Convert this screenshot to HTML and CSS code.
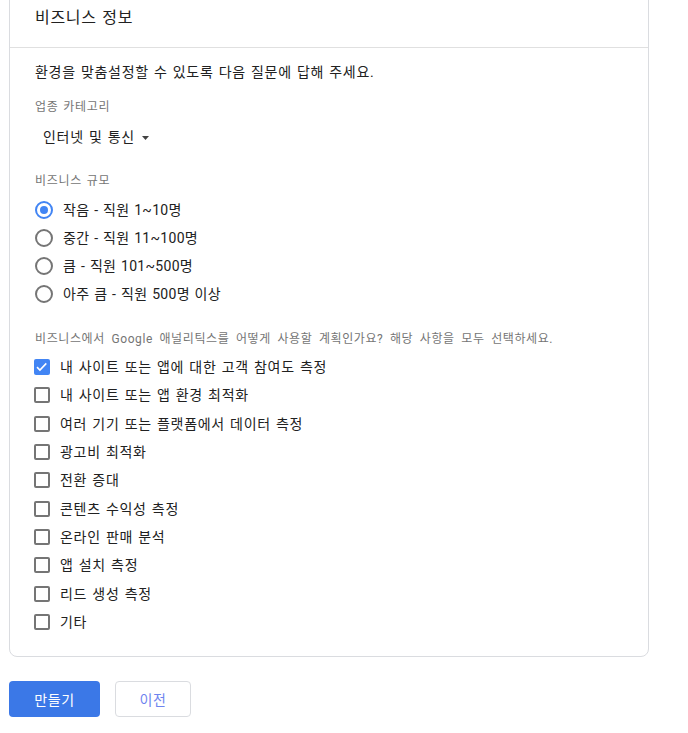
FILE: index.html
```html
<!DOCTYPE html>
<html lang="ko">
<head>
<meta charset="utf-8">
<title>비즈니스 정보</title>
<link rel="stylesheet" href="styles.css">
</head>
<body>
<div class="page">
  <section class="card">
    <div class="card-header">비즈니스 정보</div>
    <div class="card-body">
      <p class="intro">환경을 맞춤설정할 수 있도록 다음 질문에 답해 주세요.</p>

      <div class="label label-category">업종 카테고리</div>
      <div class="dropdown">
        <span>인터넷 및 통신</span>
        <svg class="caret" width="7" height="4" viewBox="0 0 7 4"><path d="M0 0h7L3.5 4z" fill="#424242"/></svg>
      </div>

      <div class="label label-size">비즈니스 규모</div>
      <div class="radios">
        <div class="row"><span class="radio checked"></span><span class="txt rtxt">작음 - 직원 1~10명</span></div>
        <div class="row"><span class="radio"></span><span class="txt rtxt">중간 - 직원 11~100명</span></div>
        <div class="row"><span class="radio"></span><span class="txt rtxt">큼 - 직원 101~500명</span></div>
        <div class="row"><span class="radio"></span><span class="txt rtxt">아주 큼 - 직원 500명 이상</span></div>
      </div>

      <div class="label label-usage">비즈니스에서 Google 애널리틱스를 어떻게 사용할 계획인가요? 해당 사항을 모두 선택하세요.</div>
      <div class="checks">
        <div class="crow"><span class="cbox checked"><svg width="16" height="16" viewBox="0 0 16 16"><path d="M3 8.2l2.9 2.8 6.4-6.6" fill="none" stroke="#fff" stroke-width="1.6"/></svg></span><span class="txt">내 사이트 또는 앱에 대한 고객 참여도 측정</span></div>
        <div class="crow"><span class="cbox"></span><span class="txt">내 사이트 또는 앱 환경 최적화</span></div>
        <div class="crow"><span class="cbox"></span><span class="txt">여러 기기 또는 플랫폼에서 데이터 측정</span></div>
        <div class="crow"><span class="cbox"></span><span class="txt">광고비 최적화</span></div>
        <div class="crow"><span class="cbox"></span><span class="txt">전환 증대</span></div>
        <div class="crow"><span class="cbox"></span><span class="txt">콘텐츠 수익성 측정</span></div>
        <div class="crow"><span class="cbox"></span><span class="txt">온라인 판매 분석</span></div>
        <div class="crow"><span class="cbox"></span><span class="txt">앱 설치 측정</span></div>
        <div class="crow"><span class="cbox"></span><span class="txt">리드 생성 측정</span></div>
        <div class="crow"><span class="cbox"></span><span class="txt">기타</span></div>
      </div>
    </div>
  </section>

  <div class="actions">
    <button class="btn btn-primary">만들기</button>
    <button class="btn btn-secondary">이전</button>
  </div>
</div>
</body>
</html>
```

FILE: styles.css
```css
* { box-sizing: border-box; }
html, body {
  margin: 0;
  padding: 0;
  background: #fff;
  overflow: hidden;
}
body {
  font-family: Roboto, "Noto Sans CJK KR", "Noto Sans", sans-serif;
  color: #212121;
  font-size: 14px;
  letter-spacing: 0.05em;
  word-spacing: 1px;
}
.page {
  padding-left: 9px;
}
.card {
  width: 640px;
  margin-top: -10px;
  border: 1px solid #dadce0;
  border-radius: 8px;
  background: #fff;
}
.card-header {
  font-size: 16px;
  line-height: 24px;
  height: 57px;
  padding: 15px 25px 0;
  border-bottom: 1px solid #e0e0e0;
  color: #212121;
}
.card-body {
  padding: 14px 25px 20px;
}
.intro {
  margin: 0;
  font-size: 14px;
  line-height: 20px;
}
.label {
  font-size: 12px;
  line-height: 16px;
  color: #757575;
}
.label-category { margin-top: 17px; }
.dropdown {
  margin-top: 12px;
  display: flex;
  align-items: center;
  gap: 7px;
  padding-left: 8px;
  height: 20px;
  font-size: 14px;
  line-height: 20px;
}
.caret { margin-top: 1px; }
.label-size { margin-top: 26px; }
.radios { margin-top: 7px; }
.row {
  height: 28px;
  display: flex;
  align-items: center;
}
.radio {
  width: 18px;
  height: 18px;
  border: 2px solid #757575;
  border-radius: 50%;
  flex: none;
  margin-right: 10px;
  position: relative;
}
.radio.checked {
  border-color: #4285f4;
}
.radio.checked::after {
  content: "";
  position: absolute;
  left: 3px;
  top: 3px;
  width: 8px;
  height: 8px;
  border-radius: 50%;
  background: #4285f4;
}
.txt {
  font-size: 14px;
  line-height: 20px;
  white-space: nowrap;
}
.rtxt {
  letter-spacing: 0.3px;
}
.label-usage {
  margin-top: 23px;
  letter-spacing: 0.6px;
  word-spacing: 3px;
  white-space: nowrap;
}
.checks { margin-top: 6px; }
.crow {
  height: 28.3px;
  display: flex;
  align-items: center;
}
.cbox {
  width: 16px;
  height: 16px;
  border: 2px solid #757575;
  border-radius: 2px;
  flex: none;
  margin-left: -1px;
  margin-right: 10px;
  display: flex;
}
.cbox.checked {
  background: #4285f4;
  border: none;
}
.actions {
  margin-top: 24px;
  display: flex;
  gap: 15px;
}
.btn {
  height: 36px;
  border-radius: 4px;
  font-family: Roboto, "Noto Sans CJK KR", sans-serif;
  font-size: 14px;
  letter-spacing: 0.05em;
  padding: 0;
  cursor: pointer;
}
.btn-primary {
  width: 91px;
  background: #3b78e7;
  color: #fff;
  border: none;
}
.btn-secondary {
  width: 76px;
  background: #fff;
  color: #6e84ef;
  border: 1px solid #dadce0;
}
```
